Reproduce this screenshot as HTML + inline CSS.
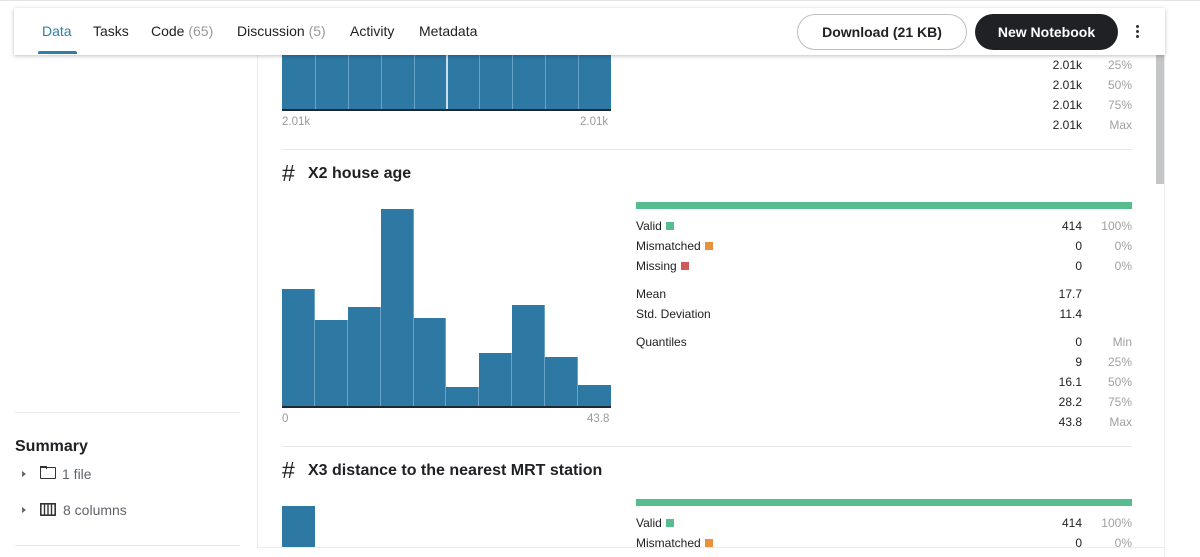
<!DOCTYPE html>
<html><head><meta charset="utf-8"><style>
*{margin:0;padding:0;box-sizing:border-box}
body{width:1200px;height:557px;overflow:hidden;background:#fff;font-family:"Liberation Sans",Arial,sans-serif;color:#202124;position:relative}
.a{position:absolute}
.bar{position:absolute;background:#2e78a4;border-right:1px solid #6ba3c6}
.s{position:absolute;font-size:12px;color:#202124;white-space:nowrap}
.v{position:absolute;font-size:12px;color:#202124;text-align:right;width:60px}
.p{position:absolute;font-size:12px;color:#a0a0a0;text-align:right;width:40px}
.sq{display:inline-block;width:8px;height:8px;margin-left:4px;vertical-align:0}
.h{position:absolute;font-size:16px;font-weight:bold;white-space:nowrap}
.h b{position:absolute;left:0;top:-5px;font-weight:normal;font-size:23px}
</style></head><body>
<div class="a" style="left:0;top:0;width:1200px;height:1px;background:#e3e3e3"></div>
<div class="a" style="left:257px;top:55px;width:1px;height:492px;background:#ececec"></div>
<div class="a" style="left:1164px;top:55px;width:1px;height:502px;background:#ececec"></div>
<div class="a" style="left:257px;top:547px;width:908px;height:1px;background:#ececec"></div>
<div class="a" style="left:1156px;top:55px;width:8px;height:129px;background:#c4c5c7"></div>

<div class="a" style="left:282px;top:55px;width:329px;height:55px;background:#2e78a4"></div>
<div class="a" style="left:315px;top:55px;width:1px;height:55px;background:#6ba3c6"></div>
<div class="a" style="left:348px;top:55px;width:1px;height:55px;background:#6ba3c6"></div>
<div class="a" style="left:381px;top:55px;width:1px;height:55px;background:#6ba3c6"></div>
<div class="a" style="left:414px;top:55px;width:1px;height:55px;background:#6ba3c6"></div>
<div class="a" style="left:446px;top:55px;width:2px;height:55px;background:#c9dfee"></div>
<div class="a" style="left:479px;top:55px;width:1px;height:55px;background:#6ba3c6"></div>
<div class="a" style="left:512px;top:55px;width:1px;height:55px;background:#6ba3c6"></div>
<div class="a" style="left:545px;top:55px;width:1px;height:55px;background:#6ba3c6"></div>
<div class="a" style="left:578px;top:55px;width:1px;height:55px;background:#6ba3c6"></div>
<div class="a" style="left:282px;top:109px;width:329px;height:2px;background:#1d2a33"></div>
<div class="s" style="left:282px;top:116px;color:#9a9a9a;font-size:11.5px">2.01k</div>
<div class="s" style="left:580px;top:116px;color:#9a9a9a;font-size:11.5px">2.01k</div>
<div class="v" style="left:1022px;top:58px">2.01k</div><div class="p" style="left:1092px;top:58px">25%</div>
<div class="v" style="left:1022px;top:78px">2.01k</div><div class="p" style="left:1092px;top:78px">50%</div>
<div class="v" style="left:1022px;top:98px">2.01k</div><div class="p" style="left:1092px;top:98px">75%</div>
<div class="v" style="left:1022px;top:118px">2.01k</div><div class="p" style="left:1092px;top:118px">Max</div>
<div class="a" style="left:282px;top:149px;width:850px;height:1px;background:#e8e8e8"></div>

<div class="h" style="left:282px;top:165px;padding-left:26px"><b>#</b>X2 house age</div>
<div class="bar" style="left:282px;top:289px;width:33px;height:118px"></div>
<div class="bar" style="left:315px;top:320px;width:33px;height:87px"></div>
<div class="bar" style="left:348px;top:307px;width:33px;height:100px"></div>
<div class="bar" style="left:381px;top:209px;width:33px;height:198px"></div>
<div class="bar" style="left:414px;top:318px;width:32px;height:89px"></div>
<div class="bar" style="left:446px;top:387px;width:33px;height:20px"></div>
<div class="bar" style="left:479px;top:353px;width:33px;height:54px"></div>
<div class="bar" style="left:512px;top:305px;width:33px;height:102px"></div>
<div class="bar" style="left:545px;top:357px;width:33px;height:50px"></div>
<div class="bar" style="left:578px;top:385px;width:33px;height:22px;border-right:none"></div>
<div class="a" style="left:282px;top:406px;width:329px;height:2px;background:#1d2a33"></div>
<div class="s" style="left:282px;top:413px;color:#9a9a9a;font-size:11.5px">0</div>
<div class="s" style="left:587px;top:413px;color:#9a9a9a;font-size:11.5px">43.8</div>

<div class="a" style="left:636px;top:202px;width:496px;height:7px;background:#57bd8e"></div>
<div class="s" style="left:636px;top:219px">Valid<span class="sq" style="background:#57bd8e"></span></div>
<div class="s" style="left:636px;top:239px">Mismatched<span class="sq" style="background:#e8913a"></span></div>
<div class="s" style="left:636px;top:259px">Missing<span class="sq" style="background:#d05a5a"></span></div>
<div class="s" style="left:636px;top:287px">Mean</div>
<div class="s" style="left:636px;top:307px">Std. Deviation</div>
<div class="s" style="left:636px;top:335px">Quantiles</div>
<div class="v" style="left:1022px;top:219px">414</div><div class="p" style="left:1092px;top:219px">100%</div>
<div class="v" style="left:1022px;top:239px">0</div><div class="p" style="left:1092px;top:239px">0%</div>
<div class="v" style="left:1022px;top:259px">0</div><div class="p" style="left:1092px;top:259px">0%</div>
<div class="v" style="left:1022px;top:287px">17.7</div>
<div class="v" style="left:1022px;top:307px">11.4</div>
<div class="v" style="left:1022px;top:335px">0</div><div class="p" style="left:1092px;top:335px">Min</div>
<div class="v" style="left:1022px;top:355px">9</div><div class="p" style="left:1092px;top:355px">25%</div>
<div class="v" style="left:1022px;top:375px">16.1</div><div class="p" style="left:1092px;top:375px">50%</div>
<div class="v" style="left:1022px;top:395px">28.2</div><div class="p" style="left:1092px;top:395px">75%</div>
<div class="v" style="left:1022px;top:415px">43.8</div><div class="p" style="left:1092px;top:415px">Max</div>
<div class="a" style="left:282px;top:446px;width:850px;height:1px;background:#e8e8e8"></div>

<div class="h" style="left:282px;top:462px;padding-left:26px"><b>#</b>X3 distance to the nearest MRT station</div>
<div class="bar" style="left:282px;top:506px;width:33px;height:41px;border-right:none"></div>
<div class="a" style="left:636px;top:499px;width:496px;height:7px;background:#57bd8e"></div>
<div class="s" style="left:636px;top:516px">Valid<span class="sq" style="background:#57bd8e"></span></div>
<div class="s" style="left:636px;top:536px">Mismatched<span class="sq" style="background:#e8913a"></span></div>
<div class="v" style="left:1022px;top:516px">414</div><div class="p" style="left:1092px;top:516px">100%</div>
<div class="v" style="left:1022px;top:536px">0</div><div class="p" style="left:1092px;top:536px">0%</div>

<div class="a" style="left:15px;top:412px;width:225px;height:1px;background:#e8e8e8"></div>
<div class="s" style="left:15px;top:438px;font-size:16px;font-weight:bold">Summary</div>
<div class="a" style="left:22px;top:471px;width:0;height:0;border-left:4px solid #666;border-top:3px solid transparent;border-bottom:3px solid transparent"></div>
<div class="a" style="left:40px;top:467px;width:16px;height:12px;border:1.6px solid #333;border-radius:1px"></div>
<div class="a" style="left:40px;top:466px;width:7px;height:3px;border:1.6px solid #333;border-bottom:none"></div>
<div class="s" style="left:62px;top:466px;font-size:14px;color:#5f6368">1 file</div>
<div class="a" style="left:22px;top:507px;width:0;height:0;border-left:4px solid #666;border-top:3px solid transparent;border-bottom:3px solid transparent"></div>
<svg class="a" style="left:40px;top:503px" width="16" height="13"><rect x="0.8" y="0.8" width="14.4" height="11.4" fill="none" stroke="#333" stroke-width="1.6"/><path d="M4.5 1v11M8 1v11M11.5 1v11" stroke="#333" stroke-width="1.4"/></svg>
<div class="s" style="left:63px;top:502px;font-size:14px;color:#5f6368">8 columns</div>
<div class="a" style="left:15px;top:545px;width:225px;height:1px;background:#e8e8e8"></div>

<div class="a" style="left:14px;top:8px;width:1151px;height:47px;background:#fff;box-shadow:0 1px 4px rgba(0,0,0,.25)"></div>
<div class="s" style="left:42px;top:23px;font-size:14px;color:#2f7fa8">Data</div>
<div class="a" style="left:38px;top:51px;width:39px;height:3px;background:#2f7fa8;border-radius:2px 2px 0 0"></div>
<div class="s" style="left:93px;top:23px;font-size:14px">Tasks</div>
<div class="s" style="left:151px;top:23px;font-size:14px">Code <span style="color:#9a9a9a">(65)</span></div>
<div class="s" style="left:237px;top:23px;font-size:14px">Discussion <span style="color:#9a9a9a">(5)</span></div>
<div class="s" style="left:350px;top:23px;font-size:14px">Activity</div>
<div class="s" style="left:419px;top:23px;font-size:14px">Metadata</div>
<div class="a" style="left:797px;top:14px;width:170px;height:36px;border:1px solid #bdbdbd;border-radius:18px;font-size:14px;font-weight:bold;text-align:center;line-height:34px">Download (21 KB)</div>
<div class="a" style="left:975px;top:14px;width:143px;height:36px;background:#202124;color:#fff;border-radius:18px;font-size:14px;font-weight:bold;text-align:center;line-height:36px">New Notebook</div>
<div class="a" style="left:1136px;top:25px;width:3px;height:3px;background:#333;border-radius:50%"></div>
<div class="a" style="left:1136px;top:30px;width:3px;height:3px;background:#333;border-radius:50%"></div>
<div class="a" style="left:1136px;top:35px;width:3px;height:3px;background:#333;border-radius:50%"></div>
</body></html>
